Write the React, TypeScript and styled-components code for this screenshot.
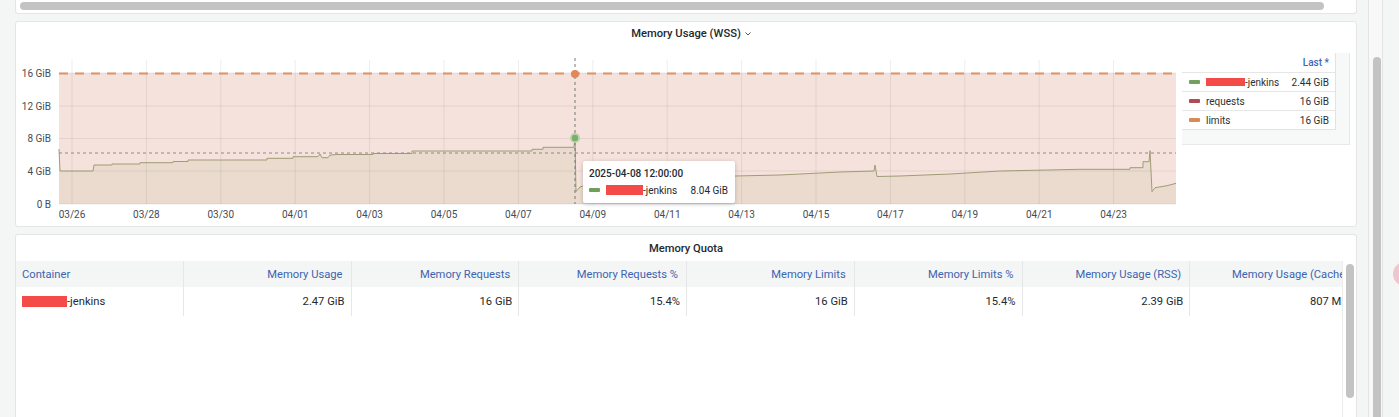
import React from "react";
import styled, { createGlobalStyle } from "styled-components";

const GlobalStyle = createGlobalStyle`
  html, body { margin: 0; padding: 0; background: #f4f5f5; overflow: hidden; }
  body { font-family: Roboto, "Liberation Sans", Arial, sans-serif; color: #24292e; }
  * { box-sizing: border-box; }
`;

const Page = styled.div`
  display: flex;
  width: 1399px;
  height: 417px;
  overflow: hidden;
  position: relative;
`;

const Main = styled.div`
  width: 1357px;
  padding-left: 15px;
  display: flex;
  flex-direction: column;
  gap: 7px;
`;

const Panel = styled.section`
  background: #fff;
  border: 1px solid #e4e5e7;
  border-radius: 3px;
  display: flex;
  flex-direction: column;
  overflow: hidden;
`;

const TopPanel = styled(Panel)`
  height: 14px;
  border-top: none;
  border-radius: 0 0 3px 3px;
  padding: 2px 0 0 4px;
`;

const HScrollThumb = styled.div`
  width: 1304px;
  height: 8px;
  border-radius: 4px;
  background: #c3c3c3;
`;

const ChartPanel = styled(Panel)`
  height: 206px;
`;

const TablePanel = styled(Panel)`
  flex: 1;
  border-bottom: none;
  border-radius: 3px 3px 0 0;
`;

const PanelTitle = styled.div<{ $h: number }>`
  height: ${(p) => p.$h}px;
  flex: none;
  display: flex;
  align-items: center;
  justify-content: center;
  font-size: 11.2px;
  font-weight: 500;
  color: #24292e;
`;

const TitleText = styled.span`
  position: relative;
`;

const TitleMenu = styled.span`
  position: absolute;
  left: calc(100% + 3px);
  top: 50%;
  margin-top: -3px;
  display: flex;
`;

const ChartBody = styled.div`
  position: relative;
  display: flex;
  height: 180px;
`;

const Plot = styled.svg`
  flex: none;
  display: block;
`;

const LegendWrap = styled.div`
  margin-top: 8px;
  width: 168px;
  height: 92px;
  background: #f7f8f8;
  border-right: 1px solid #e8e8e8;
  border-bottom: 1px solid #e8e8e8;
`;

const LegendTable = styled.div`
  width: 154px;
  background: #fff;
  border-right: 1px solid #e3e3e3;
  border-bottom: 1px solid #e3e3e3;
`;

const LegendHead = styled.div`
  height: 19px;
  display: flex;
  align-items: center;
  justify-content: flex-end;
  padding-right: 6px;
  font-size: 10px;
  font-weight: 500;
  color: #3d68b8;
`;

const LegendRow = styled.div`
  height: 19px;
  border-top: 1px solid #e6e6e6;
  display: flex;
  align-items: center;
  padding: 0 6px 0 7px;
  font-size: 10px;
  color: #2b2f33;
`;

const Swatch = styled.span<{ $c: string }>`
  width: 11px;
  height: 4px;
  border-radius: 1px;
  background: ${(p) => p.$c};
  margin-right: 6px;
  flex: none;
`;

const Redact = styled.span<{ $w: number; $h?: number }>`
  display: inline-block;
  width: ${(p) => p.$w}px;
  height: ${(p) => p.$h ?? 9}px;
  background: #f44a48;
  vertical-align: middle;
`;

const Name = styled.span`
  flex: 1;
  display: flex;
  align-items: center;
  white-space: nowrap;
`;

const Val = styled.span`
  white-space: nowrap;
`;

const Tooltip = styled.div`
  position: absolute;
  left: 567px;
  top: 116px;
  width: 152px;
  height: 42px;
  background: #fff;
  border-radius: 2px;
  box-shadow: 0 1px 4px rgba(0, 0, 0, 0.22);
  padding: 6px 7px 0 6px;
  font-size: 10px;
  color: #24292e;
`;

const TipTitle = styled.div`
  font-weight: 500;
  height: 13px;
  line-height: 13px;
`;

const TipRow = styled.div`
  margin-top: 4px;
  display: flex;
  align-items: center;
  height: 12px;
`;

const TableArea = styled.div`
  flex: 1;
  display: flex;
  min-height: 0;
`;

const TableClip = styled.div`
  width: 1326px;
  overflow: hidden;
`;

const Grid = styled.div`
  width: 1342px;
  display: grid;
  grid-template-columns: repeat(8, 1fr);
  font-size: 11.2px;
`;

const HeadCell = styled.div<{ $left?: boolean }>`
  height: 26px;
  background: #f4f5f5;
  border-right: 1px solid #e6e7e9;
  display: flex;
  align-items: center;
  justify-content: ${(p) => (p.$left ? "flex-start" : "flex-end")};
  padding: ${(p) => (p.$left ? "0 0 0 6px" : "0 8px 0 0")};
  color: #3d64b0;
  white-space: nowrap;
  overflow: hidden;
`;

const Cell = styled.div<{ $left?: boolean }>`
  height: 29px;
  border-right: 1px solid #e6e7e9;
  display: flex;
  align-items: center;
  justify-content: ${(p) => (p.$left ? "flex-start" : "flex-end")};
  padding: ${(p) => (p.$left ? "0 0 0 6px" : "0 6px 0 0")};
  color: #24292e;
  white-space: nowrap;
`;

const VTrack = styled.div`
  width: 14px;
  border-left: 1px solid #ececec;
  padding: 3px 0 0 3px;
`;

const VThumb = styled.div`
  width: 8px;
  height: 134px;
  border-radius: 4px;
  background: #c3c3c3;
`;

const Rail = styled.div`
  flex: 1;
  display: flex;
  padding-left: 11px;
`;

const RailTrack = styled.div`
  width: 15px;
  height: 100%;
  background: #f8f8f8;
  border-left: 1px solid #e4e4e4;
  border-right: 1px solid #e4e4e4;
  padding: 57px 0 0 4px;
`;

const RailThumb = styled.div`
  width: 8px;
  height: 400px;
  border-radius: 4px;
  background: #c3c3c3;
`;

const Bubble = styled.div`
  position: absolute;
  left: 1393px;
  top: 262px;
  width: 24px;
  height: 24px;
  border-radius: 50%;
  background: #f0c4d0;
`;

const DAYS = ["03/26", "03/28", "03/30", "04/01", "04/03", "04/05", "04/07", "04/09", "04/11", "04/13", "04/15", "04/17", "04/19", "04/21", "04/23"];
const X0 = 72;
const DX = 74.4;
const YT = [
  { l: "16 GiB", y: 73 },
  { l: "12 GiB", y: 106 },
  { l: "8 GiB", y: 138.5 },
  { l: "4 GiB", y: 171 },
  { l: "0 B", y: 204 },
];
const L = 59;
const R = 1176;
const TOP = 73;
const BOT = 204;

const LINE: [number, number][] = [
  [59, 149], [60, 171], [93, 171], [94, 165], [112, 165], [112, 164], [140, 164], [140, 162.7],
  [173, 162.7], [173, 161.5], [188, 161.5], [188, 160], [267, 160], [267, 158.3], [293, 158.3],
  [293, 156.7], [318, 156.7], [320, 154], [322, 157.7], [328, 157.7], [330, 155], [337, 154.5],
  [373, 154.5], [373, 153.5], [412, 153.5], [412, 151], [532, 151], [532, 149.3], [543, 149.3],
  [543, 147.3], [574, 147.3], [575, 137.5], [576, 191.7], [580, 187], [586, 185], [600, 182],
  [620, 180], [650, 179], [700, 177], [735, 176], [780, 175], [800, 174], [840, 172], [874, 171],
  [875, 165], [877, 176.5], [900, 176], [950, 174], [1000, 171], [1080, 169.3], [1130, 169.3],
  [1130, 167.7], [1143, 167.7], [1143, 161.7], [1149, 161.7], [1150, 150.7], [1152, 191.7],
  [1155, 187.7], [1167, 185.7], [1176, 183.3],
];

const linePts = LINE.map(([x, y]) => `${x},${y}`).join(" ");
const areaPath = `M${LINE.map(([x, y]) => `${x},${y}`).join(" L")} L${R},${BOT} L${L},${BOT} Z`;

const Chevron = () => (
  <svg width="8" height="6" viewBox="0 0 8 6">
    <polyline points="1.5,1.5 4,4 6.5,1.5" fill="none" stroke="#555" strokeWidth="1" />
  </svg>
);

const Chart = () => (
  <Plot width={1166} height={180} viewBox="16 45 1166 180">
    <rect x={L} y={TOP} width={R - L} height={BOT - TOP} fill="#f6e2dc" />
    <path d={areaPath} fill="#eadbce" />
    {DAYS.map((d, i) => (
      <line key={d} x1={X0 + i * DX} x2={X0 + i * DX} y1={60} y2={BOT} stroke="rgba(0,0,0,0.07)" />
    ))}
    {YT.map((t) => (
      <line key={t.l} x1={L} x2={R} y1={t.y} y2={t.y} stroke="rgba(0,0,0,0.07)" />
    ))}
    <polyline points={linePts} fill="none" stroke="#9f9c75" strokeWidth={1} />
    <line x1={L} x2={R} y1={73.5} y2={73.5} stroke="#e0915c" strokeWidth={2} strokeDasharray="9 7" />
    <line x1={L} x2={R} y1={153} y2={153} stroke="#8a8a8a" strokeWidth={1} strokeDasharray="3 3" />
    <line x1={575} x2={575} y1={58} y2={BOT} stroke="#777" strokeWidth={1} strokeDasharray="3 3" />
    <circle cx={575} cy={74} r={4} fill="#e3865a" />
    <circle cx={575} cy={138} r={5} fill="#b9d4a9" />
    <circle cx={575} cy={138} r={3.2} fill="#7fae6c" />
    {YT.map((t) => (
      <text key={t.l} x={51} y={t.y + 3.5} textAnchor="end" fontSize={10} fill="#464c54" fontFamily="Roboto, sans-serif">
        {t.l}
      </text>
    ))}
    {DAYS.map((d, i) => (
      <text key={d} x={X0 + i * DX} y={218} textAnchor="middle" fontSize={10} fill="#464c54" fontFamily="Roboto, sans-serif">
        {d}
      </text>
    ))}
  </Plot>
);

const COLS = [
  "Container",
  "Memory Usage",
  "Memory Requests",
  "Memory Requests %",
  "Memory Limits",
  "Memory Limits %",
  "Memory Usage (RSS)",
  "Memory Usage (Cache)",
];
const ROW = ["2.47 GiB", "16 GiB", "15.4%", "16 GiB", "15.4%", "2.39 GiB", "807 MiB"];

const legend = [
  { c: "#73a15d", name: "jenkins", v: "2.44 GiB" },
  { c: "#b24a55", name: "requests", v: "16 GiB" },
  { c: "#d68d55", name: "limits", v: "16 GiB" },
];

export default function App() {
  return (
    <>
      <GlobalStyle />
      <Page>
        <Main>
          <TopPanel>
            <HScrollThumb />
          </TopPanel>
          <ChartPanel>
            <PanelTitle $h={23}>
              <TitleText>
                Memory Usage (WSS)
                <TitleMenu>
                  <Chevron />
                </TitleMenu>
              </TitleText>
            </PanelTitle>
            <ChartBody>
              <Chart />
              <LegendWrap>
                <LegendTable>
                  <LegendHead>Last *</LegendHead>
                  {legend.map((l) => (
                    <LegendRow key={l.c}>
                      <Swatch $c={l.c} />
                      <Name>
                        {l.name === "jenkins" ? (
                          <>
                            <Redact $w={39} $h={8} />
                            -jenkins
                          </>
                        ) : (
                          l.name
                        )}
                      </Name>
                      <Val>{l.v}</Val>
                    </LegendRow>
                  ))}
                </LegendTable>
              </LegendWrap>
              <Tooltip>
                <TipTitle>2025-04-08 12:00:00</TipTitle>
                <TipRow>
                  <Swatch $c="#6f9f5b" />
                  <Name>
                    <Redact $w={37} $h={10} />
                    -jenkins
                  </Name>
                  <Val>8.04 GiB</Val>
                </TipRow>
              </Tooltip>
            </ChartBody>
          </ChartPanel>
          <TablePanel>
            <PanelTitle $h={26}>Memory Quota</PanelTitle>
            <TableArea>
              <TableClip>
                <Grid>
                  {COLS.map((c, i) => (
                    <HeadCell key={c} $left={i === 0}>
                      {c}
                    </HeadCell>
                  ))}
                  <Cell $left>
                    <Redact $w={45} $h={11} />
                    -jenkins
                  </Cell>
                  {ROW.map((v, i) => (
                    <Cell key={i}>{v}</Cell>
                  ))}
                </Grid>
              </TableClip>
              <VTrack>
                <VThumb />
              </VTrack>
            </TableArea>
          </TablePanel>
        </Main>
        <Rail>
          <RailTrack>
            <RailThumb />
          </RailTrack>
        </Rail>
        <Bubble />
      </Page>
    </>
  );
}
